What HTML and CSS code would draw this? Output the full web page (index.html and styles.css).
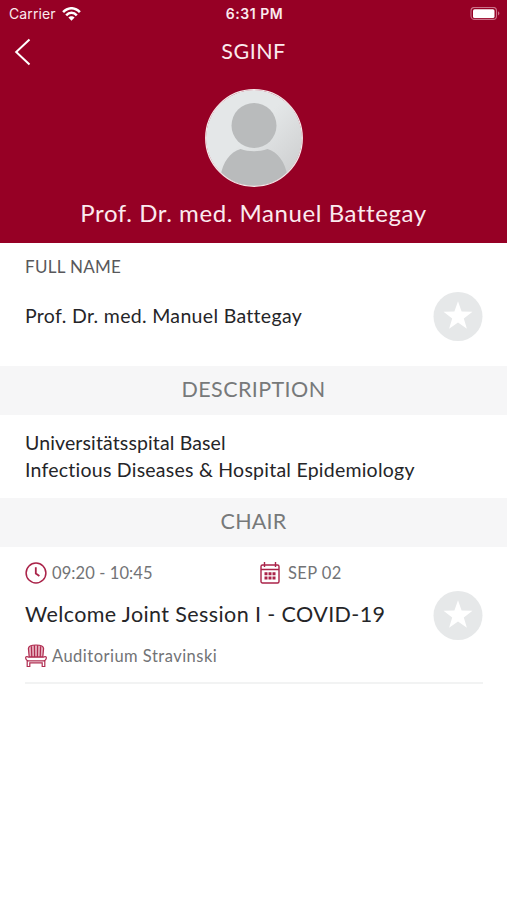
FILE: index.html
```html
<!DOCTYPE html>
<html lang="en">
<head>
<meta charset="utf-8">
<meta name="viewport" content="width=device-width, initial-scale=1">
<title>SGINF</title>
<link rel="stylesheet" href="styles.css">
</head>
<body>
<header class="hero">
  <div class="status">
    <div class="carrier"><span class="carrier-name">Carrier</span>
      <svg class="wifi" viewBox="0 0 19 14" width="19" height="14"><g fill="none" stroke="#fff" stroke-width="2.5"><path d="M1.1 5.2C6-.1 13-.1 17.9 5.2"/><path d="M4.2 8.3c3-3.3 7.600-3.300 10.600 0"/></g><path fill="#fff" d="M6.400 10.600c1.700-1.800 4.500-1.800 6.200 0L9.500 13.800z"/></svg>
    </div>
    <div class="clock">6:31 PM</div>
    <div class="battery-wrap"><svg width="30" height="14" viewBox="0 0 30 14"><rect x="1" y=".4" width="25.500" height="12" rx="3.500" fill="none" stroke="#cb7189" stroke-width="1.100"/><rect x="3" y="2.200" width="21.500" height="8.800" rx="1.600" fill="#fff"/><path d="M28 4.300c1.900.8 1.900 3.400 0 4.200z" fill="#cb7189"/></svg></div>
  </div>
  <nav class="nav">
    <svg class="back" width="18" height="28" viewBox="0 0 18 28"><path d="M15.500 1.500 2.200 14l13.300 12.500" fill="none" stroke="#fff" stroke-width="2"/></svg>
    <h1 class="nav-title"><span class="t-nav">SGINF</span></h1>
  </nav>
  <svg class="avatar" width="98" height="98" viewBox="0 0 98 98">
    <defs><linearGradient id="bg" x1="0" y1="0" x2="1" y2="1"><stop offset=".45" stop-color="#e4e7e8"/><stop offset="1" stop-color="#c9cacb"/></linearGradient><clipPath id="c"><circle cx="49" cy="49" r="48"/></clipPath></defs>
    <circle cx="49" cy="49" r="48" fill="url(#bg)"/>
    <g clip-path="url(#c)" fill="#b9bbbc"><circle cx="49" cy="36.500" r="22.500"/><path d="M15.500 87C18 73 25 63 35.500 60c8.500 3 18.500 3 27 0 10.500 3 17.500 13 20 27v12h-67z"/></g>
    <circle cx="49" cy="49" r="48.300" fill="none" stroke="#f4e6e8" stroke-width="1.300"/>
  </svg>
  <h2 class="hero-name"><span class="t-hero">Prof. Dr. med. Manuel Battegay</span></h2>
</header>
<main>
  <section class="name-section">
    <div class="label"><span class="t-label">FULL NAME</span></div>
    <div class="name-row"><span class="t-name">Prof. Dr. med. Manuel Battegay</span>
      <svg class="star" width="50" height="50" viewBox="0 0 50 50"><circle cx="25" cy="25.500" r="24.500" fill="#e6e8e9"/><path fill="#fff" d="M25 10.300l3.600 10.200 10.900.3-8.700 6.600 3.100 10.400L25 31.600l-8.900 6.200 3.100-10.400-8.700-6.600 10.900-.3z"/></svg>
    </div>
  </section>
  <h3 class="band"><span class="t-desc">DESCRIPTION</span></h3>
  <section class="description">
    <p><span class="t-uni">Universitätsspital Basel</span></p>
    <p><span class="t-inf">Infectious Diseases &amp; Hospital Epidemiology</span></p>
  </section>
  <h3 class="band"><span class="t-chair">CHAIR</span></h3>
  <article class="session">
    <div class="meta">
      <div class="time"><svg width="22" height="22" viewBox="0 0 22 22" fill="none" stroke="#aa2349"><circle cx="11" cy="11" r="9.900" stroke-width="1.500"/><path d="M10.800 5.300v6.200l3.600 2.600" stroke-width="1.800"/></svg><span class="t-time">09:20 - 10:45</span></div>
      <div class="date"><svg width="20" height="22" viewBox="0 0 20 22"><g fill="none" stroke="#aa2349" stroke-width="1.400"><rect x="1" y="3" width="18" height="18" rx="1.500"/><path d="M1 7.500h18M4.500 0v5M15.500 0v5"/></g><g fill="#aa2349"><path d="M4.500 10.200h3v3h-3zM8.500 10.200h3v3h-3zM12.500 10.200h3v3h-3zM4.500 14.600h3v3h-3zM8.500 14.600h3v3h-3zM12.500 14.600h3v3h-3z"/></g></svg><span class="t-date">SEP 02</span></div>
    </div>
    <div class="title-row"><span class="t-title">Welcome Joint Session I - COVID-19</span>
      <svg class="star" width="50" height="50" viewBox="0 0 50 50"><circle cx="25" cy="25.500" r="24.500" fill="#e6e8e9"/><path fill="#fff" d="M25 10.300l3.600 10.200 10.900.3-8.700 6.600 3.100 10.400L25 31.600l-8.900 6.200 3.100-10.400-8.700-6.600 10.900-.3z"/></svg>
    </div>
    <div class="place"><svg width="22" height="24" viewBox="0 0 22 24" fill="none" stroke="#b02c50" stroke-width="1.200"><path d="M4.200 13 3.400 4.500C3.500 2 7 1 11 1s7.500 1 7.600 3.500L17.800 13z" fill="#e5afbd"/><path d="M6.800 13 6.400 2.300M9.600 13l-.2-11.800M12.400 13l.2-11.800M15.200 13l.4-10.700"/><path d="M3.700 13.200C1.500 12 .3 13 .8 14.500c.3 1.500 1.200 2.300 2.700 2.300h15c1.500 0 2.400-.8 2.700-2.300.5-1.500-.7-2.500-2.900-1.300zM2.200 16.800V22.500h2.600v-3.700h12.400v3.700h2.600v-5.700" fill="#fff"/></svg><span class="t-place">Auditorium Stravinski</span></div>
  </article>
</main>
</body>
</html>
```
FILE: styles.css
```css
* { box-sizing: border-box; margin: 0; padding: 0; }
body { background: #fff; color: #252528; font-family: Lato, "Open Sans", sans-serif; font-variant-ligatures: none; }
svg { display: block; flex: none; }
h1, h2, h3 { font-weight: 400; }
span { white-space: nowrap; }

.hero { height: 243px; background: #960025; color: #fbeaee; display: flex; flex-direction: column; align-items: center; }
.status { width: 100%; height: 27px; padding: 0 7px 0 9px; display: grid; grid-template-columns: 1fr auto 1fr; align-items: center; font-family: Inter, sans-serif; }
.carrier { display: flex; align-items: center; gap: 6px; }
.carrier-name { font-size: 14px; letter-spacing: .1px; }
.clock { font-size: 14px; font-weight: 600; letter-spacing: .55px; color: #fbeaee; }
.battery-wrap { justify-self: end; }
.nav { width: 100%; height: 50px; padding: 0 15px; display: grid; grid-template-columns: 18px 1fr 18px; align-items: start; }
.back { margin-top: 11px; margin-left: -1px; }
.nav-title { text-align: center; line-height: 50px; height: 50px; font-size: 21.5px; margin-top: -1px; }
.avatar { margin-top: 12px; }
.hero-name { height: 52px; line-height: 52px; }

.t-nav { letter-spacing: .5px; }
.t-hero { font-size: 24px; letter-spacing: .57px; }
.name-section { height: 123px; padding: 12px 24px 0 25px; }
.label { height: 24px; line-height: 24px; color: #58585b; }
.t-label { font-size: 17px; letter-spacing: .3px; }
.name-row { margin-top: 12px; height: 50px; display: flex; align-items: center; justify-content: space-between; }
.t-name, .t-uni, .t-inf { font-size: 19.5px; }
.t-name { letter-spacing: .32px; margin-top: -2px; }
.t-uni { letter-spacing: .13px; }
.t-inf { letter-spacing: .24px; }
.band { height: 49px; line-height: 47px; font-size: 21.5px; text-align: center; background: #f6f6f7; color: #77797a; }
.t-desc { letter-spacing: .4px; }
.t-chair { letter-spacing: .2px; }
.description { height: 83px; padding: 15px 25px 0; }
.description p { height: 26.5px; line-height: 26.5px; }
.session { margin: 0 24px 0 25px; height: 137px; border-bottom: 2px solid #f2f3f3; }
.meta { display: flex; padding-top: 15px; color: #727376; }
.time, .date, .place { display: flex; align-items: center; }
.time { width: 235px; gap: 5px; }
.date { gap: 8px; }
.t-time, .t-date, .t-place { font-size: 16.5px; }
.t-time { letter-spacing: .1px; }
.t-date { letter-spacing: .4px; }
.t-place { letter-spacing: .48px; }
.title-row { height: 50px; margin-top: 6px; display: flex; align-items: center; justify-content: space-between; }
.t-title { font-size: 21.5px; letter-spacing: .4px; margin-top: -2px; }
.place { gap: 5px; margin-top: 4px; height: 24px; color: #727376; }
```
